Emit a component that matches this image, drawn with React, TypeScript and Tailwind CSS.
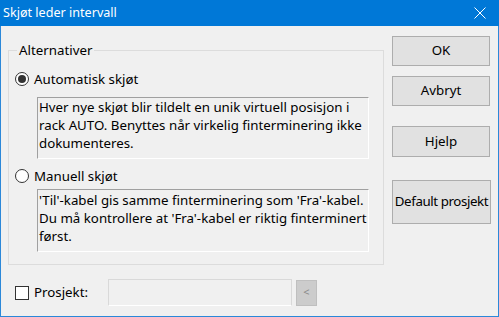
import React, { useState } from "react";

const font = "[font-family:'Noto_Sans','Liberation_Sans',sans-serif]";

interface RadioProps {
  label: string;
  checked: boolean;
  onClick: () => void;
}

const Radio: React.FC<RadioProps> = ({ label, checked, onClick }) => (
  <div className="flex items-center h-[16px] cursor-default" onClick={onClick}>
    <div className="w-[14px] h-[14px] rounded-full border border-[#333333] bg-white flex items-center justify-center">
      {checked && <div className="w-[8px] h-[8px] rounded-full bg-[#333333]" />}
    </div>
    <span className="ml-[5px] text-[13.3px] leading-[16px] text-black">{label}</span>
  </div>
);

const InfoBox = ({ text, className }: { text: string; className: string }) => (
  <div
    className={`ml-[22px] w-[332px] border border-t-[#a0a0a0] border-l-[#a0a0a0] border-b-white border-r-white px-[1px] text-[13.3px] leading-[18px] text-black ${className}`}
  >
    {text}
  </div>
);

const Button = ({ label, className }: { label: string; className: string }) => (
  <button
    className={`w-[98px] bg-[#e1e1e1] border border-[#adadad] text-[13.3px] text-black whitespace-nowrap ${className}`}
  >
    {label}
  </button>
);

export default function App() {
  const [mode, setMode] = useState<"auto" | "manual">("auto");
  const [project, setProject] = useState(false);

  return (
    <div
      className={`w-[499px] h-[317px] flex flex-col bg-[#f0f0f0] border-x border-b border-[#2b88d9] ${font}`}
    >
      <div className="h-[26px] bg-[#0078d7] flex items-center justify-between pl-[3px] pr-[12px] text-white text-[12.6px] -mx-[1px]">
        <span>Skjøt leder intervall</span>
        <svg width="12" height="12" viewBox="0 0 12 12" className="mr-[1px]">
          <path d="M0.5 0.5 L11.5 11.5 M11.5 0.5 L0.5 11.5" stroke="white" strokeWidth="1" />
        </svg>
      </div>

      <div className="flex-1 flex pl-[7px]">
        <div className="flex flex-col w-[376px]">
          <fieldset className="mt-[16px] h-[223px] border border-[#dcdcdc] px-[6px] flex flex-col">
            <legend className="ml-[2px] px-[2px] text-[13.3px] leading-[16px] text-black">
              Alternativer
            </legend>
            <div className="mt-[13px]">
              <Radio
                label="Automatisk skjøt"
                checked={mode === "auto"}
                onClick={() => setMode("auto")}
              />
            </div>
            <InfoBox
              className="mt-[10px] h-[62px]"
              text="Hver nye skjøt blir tildelt en unik virtuell posisjon i rack AUTO. Benyttes når virkelig finterminering ikke dokumenteres."
            />
            <div className="mt-[9px]">
              <Radio
                label="Manuell skjøt"
                checked={mode === "manual"}
                onClick={() => setMode("manual")}
              />
            </div>
            <InfoBox
              className="mt-[5px] h-[63px] pt-[1px]"
              text="'Til'-kabel gis samme finterminering som 'Fra'-kabel. Du må kontrollere at 'Fra'-kabel er riktig finterminert først."
            />
          </fieldset>

          <div className="mt-[14px] flex items-center">
            <div
              className="ml-[7px] w-[14px] h-[14px] border border-[#333333] bg-white flex items-center justify-center"
              onClick={() => setProject(!project)}
            >
              {project && <span className="text-[10px] leading-none">✓</span>}
            </div>
            <span className="ml-[5px] w-[74px] text-[13.3px] text-black">Prosjekt:</span>
            <div className="w-[184px] h-[27px] border border-[#d9d9d9] border-b-white bg-[#f0f0f0]" />
            <div className="ml-[4px] w-[21px] h-[26px] bg-[#cccccc] border border-[#bfbfbf] flex items-center justify-center text-[11px] text-[#8a8a8a]">
              &lt;
            </div>
          </div>
        </div>

        <div className="ml-[8px] flex flex-col">
          <Button label="OK" className="mt-[10px] h-[30px] border-[#0078d7]" />
          <Button label="Avbryt" className="mt-[10px] h-[30px]" />
          <Button label="Hjelp" className="mt-[20px] h-[31px]" />
          <Button label="Default prosjekt" className="mt-[23px] h-[44px] w-[99px] tracking-[-0.4px] text-[12.6px]" />
        </div>
      </div>
    </div>
  );
}
